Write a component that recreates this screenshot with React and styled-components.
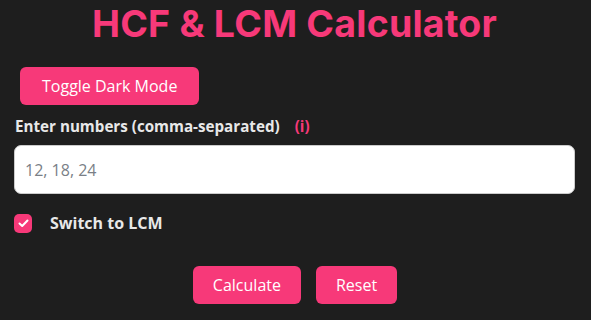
import styled, { createGlobalStyle } from 'styled-components';

const Global = createGlobalStyle`
  body {
    margin: 0;
    background: #1e1e1e;
    font-family: "Open Sans", "Noto Sans", sans-serif;
    color: #e8e8e8;
  }
`;

const pink = '#f73979';

const Page = styled.main`
  padding: 0 16px 0 14px;
  display: flex;
  flex-direction: column;
`;

const Title = styled.h1`
  margin: 0;
  padding-top: 2px;
  text-align: center;
  font-family: Inter, "Noto Sans", sans-serif;
  font-weight: 700;
  font-size: 37.5px;
  line-height: 44px;
  color: ${pink};
  letter-spacing: 0.2px;
`;

const Button = styled.button`
  background: ${pink};
  color: #fff;
  border: none;
  border-radius: 6px;
  font-family: inherit;
  font-size: 16px;
  height: 38px;
  padding: 0 ${(p) => p.$px || 20}px;
  cursor: pointer;
`;

const ToggleRow = styled.div`
  margin-top: 21px;
  padding-left: 6px;
`;

const Label = styled.label`
  margin-top: 11px;
  display: flex;
  align-items: center;
  gap: 15px;
  font-weight: 700;
  font-size: 15.2px;
  padding-left: 1px;
`;

const Info = styled.span`
  color: ${pink};
`;

const Input = styled.input`
  margin-top: 9px;
  box-sizing: border-box;
  width: 100%;
  height: 49px;
  border: 1px solid #ccc;
  border-radius: 7px;
  padding: 0 10px;
  font-family: inherit;
  font-size: 16px;
  &::placeholder {
    color: #7a7f87;
  }
`;

const CheckRow = styled.div`
  margin-top: 18px;
  display: flex;
  align-items: center;
  gap: 18px;
  font-weight: 700;
  font-size: 16px;
`;

const Box = styled.span`
  width: 18px;
  height: 19px;
  border-radius: 5px;
  background: ${pink};
  display: flex;
  align-items: center;
  justify-content: center;
`;

const Actions = styled.div`
  margin-top: 32px;
  display: flex;
  justify-content: center;
  gap: 15px;
  padding-left: 1px;
`;

export default function App() {
  return (
    <>
      <Global />
      <Page>
        <Title>HCF &amp; LCM Calculator</Title>
        <ToggleRow>
          <Button $px={22}>Toggle Dark Mode</Button>
        </ToggleRow>
        <Label>
          Enter numbers (comma-separated) <Info>(i)</Info>
        </Label>
        <Input placeholder="12, 18, 24" />
        <CheckRow>
          <Box>
            <svg width="11" height="9" viewBox="0 0 11 9">
              <path d="M1.5 4.5 L4.2 7 L9.5 1.5" fill="none" stroke="#fff" strokeWidth="2" strokeLinecap="round" strokeLinejoin="round" />
            </svg>
          </Box>
          <span>Switch to LCM</span>
        </CheckRow>
        <Actions>
          <Button $px={20}>Calculate</Button>
          <Button $px={20}>Reset</Button>
        </Actions>
      </Page>
    </>
  );
}
